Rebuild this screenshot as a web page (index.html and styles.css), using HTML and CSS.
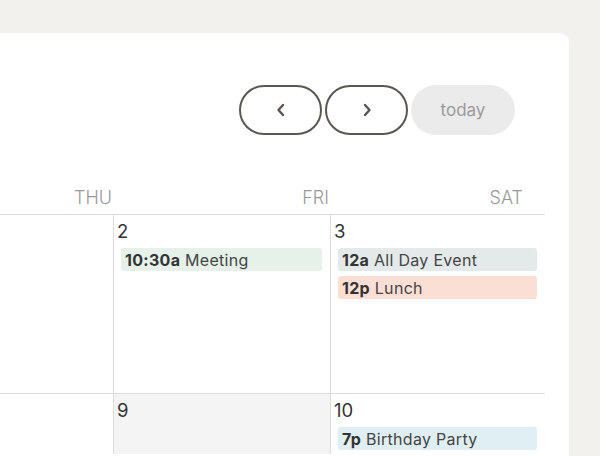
FILE: index.html
```html
<!DOCTYPE html>
<html>
<head>
<meta charset="utf-8">
<link rel="stylesheet" href="styles.css">
</head>
<body>
<div class="card">
  <div class="toolbar">
    <button class="nav-btn" aria-label="prev">
      <svg width="14" height="16" viewBox="0 0 14 16"><path d="M9 3 L4.5 8 L9 13" fill="none" stroke="#5d524b" stroke-width="2.4" stroke-linecap="round" stroke-linejoin="round"/></svg>
    </button>
    <button class="nav-btn" aria-label="next">
      <svg width="14" height="16" viewBox="0 0 14 16"><path d="M5 3 L9.5 8 L5 13" fill="none" stroke="#5d524b" stroke-width="2.4" stroke-linecap="round" stroke-linejoin="round"/></svg>
    </button>
    <button class="today-btn">today</button>
  </div>
  <div class="grid">
    <div class="head">THU</div>
    <div class="head">FRI</div>
    <div class="head head-last">SAT</div>

    <div class="cell first"></div>
    <div class="cell">
      <div class="num">2</div>
      <div class="event green"><b>10:30a</b> Meeting</div>
    </div>
    <div class="cell">
      <div class="num">3</div>
      <div class="event teal"><b>12a</b> All Day Event</div>
      <div class="event peach"><b>12p</b> Lunch</div>
    </div>

    <div class="cell first row2"></div>
    <div class="cell row2 muted">
      <div class="num">9</div>
    </div>
    <div class="cell row2">
      <div class="num">10</div>
      <div class="event blue"><b>7p</b> Birthday Party</div>
    </div>
  </div>
</div>
</body>
</html>
```
FILE: styles.css
```css
html, body {
  margin: 0;
  padding: 0;
  background: #f2f1ed;
  font-family: "Inter", "Lato", sans-serif;
  overflow: hidden;
  height: 456px;
}
.card {
  margin-top: 33px;
  width: 545px;
  padding-right: 24px;
  height: 440px;
  background: #fff;
  border-radius: 0 9px 0 0;
}
.toolbar {
  display: flex;
  justify-content: flex-end;
  gap: 3px;
  padding-top: 52px;
  padding-right: 30px;
  height: 50px;
}
.nav-btn {
  width: 83px;
  height: 50px;
  box-sizing: border-box;
  border: 2.5px solid #5b5750;
  border-radius: 25px;
  background: #fff;
  display: flex;
  align-items: center;
  justify-content: center;
  padding: 0;
}
.today-btn {
  width: 104px;
  height: 50px;
  border: none;
  border-radius: 25px;
  background: #ebebeb;
  color: #9a9a9a;
  font-family: "Inter", sans-serif;
  font-size: 17px;
  padding: 0;
}
.grid {
  margin-top: 50px;
  display: grid;
  grid-template-columns: 113px 217px 215px;
  grid-template-rows: 30px 179px 60px;
}
.head {
  text-align: right;
  padding-right: 1px;
  font-size: 18px;
  font-weight: 300;
  color: #999;
  border-bottom: 1px solid #dcdcdc;
  line-height: 22px;
  padding-top: 2px;
  height: 27px;
}
.head-last {
  padding-right: 22px;
}
.cell {
  border-left: 1px solid #dcdcdc;
  border-bottom: 1px solid #dcdcdc;
  padding: 0;
}
.cell.first {
  border-left: none;
}
.cell.row2 {
  border-bottom: none;
}
.muted {
  background: #f4f4f4;
}
.num {
  font-size: 18.5px;
  color: #333;
  padding: 6px 0 0 3px;
  height: 25px;
  line-height: 20px;
}
.event {
  margin: 2px 8px 5px 7px;
  height: 22px;
  padding-top: 1px;
  line-height: 23px;
  border-radius: 3px;
  padding-left: 4px;
  font-size: 16px;
  letter-spacing: 0.3px;
  color: #444;
  white-space: nowrap;
  overflow: hidden;
}
.event b {
  color: #333;
  font-weight: 700;
}
.green { background: #e6f1e9; }
.teal { background: #e3eae9; }
.peach { background: #fbdfd5; }
.blue { background: #e0eff4; }
```
